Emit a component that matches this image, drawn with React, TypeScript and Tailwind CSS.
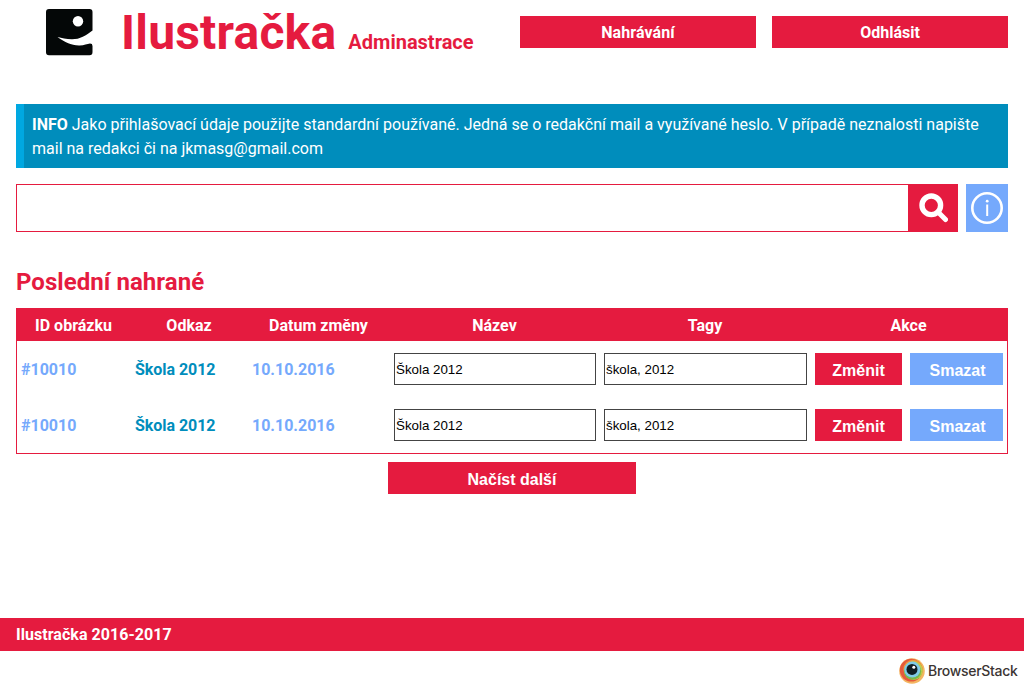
const rows = [
  { id: '#10010', link: 'Škola 2012', date: '10.10.2016', name: 'Škola 2012', tags: 'škola, 2012' },
  { id: '#10010', link: 'Škola 2012', date: '10.10.2016', name: 'Škola 2012', tags: 'škola, 2012' },
];

const columns = ['ID obrázku', 'Odkaz', 'Datum změny', 'Název', 'Tagy', 'Akce'];

function Logo() {
  return (
    <svg viewBox="0 0 47 47" className="h-[47px] w-[47px]" aria-hidden="true">
      <path
        d="M3 0H43.5Q46.5 0 46.5 3V21.500C40 26.500 34 30.300 26 30.300C20 30.300 16 28.800 11.500 28C18 32.800 25 36.300 33 36.600C38 36.800 41 34.800 44 34.600Q46.500 34.600 46.500 37V43Q46.500 46.300 43.500 46.300H3Q0 46.300 0 43.300V3Q0 0 3 0Z"
        fill="#040707"
      />
      <circle cx="32" cy="12.300" r="5.200" fill="#fff" />
    </svg>
  );
}

function SearchIcon() {
  return (
    <svg viewBox="0 0 30 30" className="h-[30px] w-[30px]" aria-hidden="true">
      <circle cx="13.300" cy="12.300" r="9.300" fill="none" stroke="#fff" strokeWidth="5.400" />
      <path d="M20 19L27.500 26.500" stroke="#fff" strokeWidth="5" strokeLinecap="round" />
    </svg>
  );
}

function InfoIcon() {
  return (
    <svg viewBox="0 0 32 32" className="h-8 w-8" aria-hidden="true">
      <circle cx="16" cy="16" r="14.700" fill="none" stroke="#fff" strokeWidth="2.600" />
      <path d="M16.200 12.500V24" stroke="#fff" strokeWidth="2" />
      <circle cx="16.200" cy="9.200" r="1.400" fill="#fff" />
    </svg>
  );
}

function BrowserStackMark() {
  return (
    <svg viewBox="0 0 26 26" className="h-[26px] w-[26px]" aria-hidden="true">
      <circle cx="13" cy="13" r="12.800" fill="#f4b661" />
      <circle cx="12.200" cy="12.100" r="11.400" fill="#e55a3c" />
      <circle cx="14" cy="11.300" r="9.600" fill="#ee9b3f" />
      <circle cx="14.500" cy="12.600" r="9.400" fill="#bdce4b" />
      <circle cx="13.600" cy="13.200" r="8.500" fill="#78b84c" />
      <circle cx="13.300" cy="11.600" r="8" fill="#7fcbe8" />
      <circle cx="13" cy="11.400" r="5.500" fill="#101e24" />
      <circle cx="14.800" cy="9.200" r="1.500" fill="#fff" />
    </svg>
  );
}

export default function App() {
  return (
    <div className="flex h-[690px] w-[1024px] flex-col overflow-hidden bg-white font-['Roboto',sans-serif] text-base leading-6 text-black">
      <header className="flex h-[104px] shrink-0 items-start px-4">
        <div className="ml-[30px] mt-[9px] shrink-0">
          <Logo />
        </div>
        <h1 className="ml-[28px] mt-px w-[399px] whitespace-nowrap text-5xl font-bold leading-[64px] tracking-[0.2px] text-[#e51b3f]">
          Ilustračka<small className="ml-[12px] text-xl font-bold tracking-normal">Adminastrace</small>
        </h1>
        <nav className="mt-4 flex gap-4 text-center font-bold leading-[34px] text-white">
          <a className="h-8 w-[236px] bg-[#e51b3f] tracking-[0.1px]">Nahrávání</a>
          <a className="h-8 w-[236px] bg-[#e51b3f]">Odhlásit</a>
        </nav>
      </header>

      <main className="flex flex-1 flex-col px-4">
        <p className="h-16 border-l-8 border-[#00a8e1] bg-[#008dbc] pb-[7px] pl-2 pr-4 pt-[9px] leading-6 text-white">
          <strong className="font-bold">INFO</strong> Jako přihlašovací údaje použijte standardní používané. Jedná se
          o redakční mail a využívané heslo. V případě neznalosti napište mail na redakci či na jkmasg@gmail.com
        </p>

        <form className="mt-4 flex h-12">
          <input type="text" aria-label="Hledat" className="min-w-0 flex-1 border border-r-0 border-[#e51b3f] px-2 outline-none" />
          <button type="button" aria-label="Hledat" className="flex w-[50px] items-center justify-center bg-[#e51b3f]">
            <SearchIcon />
          </button>
          <button type="button" aria-label="Info" className="ml-2 flex w-[42px] items-center justify-center bg-[#75a9fc]">
            <InfoIcon />
          </button>
        </form>

        <h2 className="mt-[34px] text-2xl font-bold leading-8 tracking-[0.05px] text-[#e51b3f]">Poslední nahrané</h2>

        <div className="mt-[10px] border border-[#e51b3f] font-bold">
          <div className="grid h-8 grid-cols-[114px_117px_142px_210px_211px_196px] bg-[#e51b3f] text-center leading-[34px] text-white">
            {columns.map((column) => (
              <div key={column} className="pr-px">{column}</div>
            ))}
          </div>
          {rows.map((row, index) => (
            <div
              key={index}
              className="grid h-14 grid-cols-[114px_117px_142px_210px_211px_196px] items-center text-[#75a9fc]"
            >
              <div className="px-1 pt-0.5">{row.id}</div>
              <div className="px-1 pt-0.5 tracking-[-0.05px] text-[#008dbc]">{row.link}</div>
              <div className="px-1 pt-0.5">{row.date}</div>
              <div className="flex px-1">
                <input
                  defaultValue={row.name}
                  className="h-8 w-full border border-[#444] px-px font-['Liberation_Sans',sans-serif] text-[13.333px] font-normal text-black outline-none"
                />
              </div>
              <div className="flex px-1">
                <input
                  defaultValue={row.tags}
                  className="h-8 w-full border border-[#444] px-px font-['Liberation_Sans',sans-serif] text-[13.333px] font-normal text-black outline-none"
                />
              </div>
              <div className="flex gap-2 px-1 font-['Liberation_Sans',sans-serif] text-white">
                <button type="button" className="h-8 w-[87px] bg-[#e51b3f] pt-[3px]">Změnit</button>
                <button type="button" className="h-8 w-[93px] bg-[#75a9fc] pl-0.5 pt-[3px]">Smazat</button>
              </div>
            </div>
          ))}
        </div>

        <button
          type="button"
          className="mt-2 h-8 w-[248px] self-center bg-[#e51b3f] pt-[3px] font-['Liberation_Sans',sans-serif] font-bold text-white"
        >
          Načíst další
        </button>
      </main>

      <footer className="shrink-0">
        <div className="h-[33px] bg-[#e51b3f] px-4 font-bold leading-[34px] tracking-[0.04px] text-white">
          Ilustračka 2016-2017
        </div>
        <div className="flex h-[39px] items-center justify-end gap-[3px] pr-[6px]">
          <BrowserStackMark />
          <span className="w-[90px] whitespace-nowrap font-['Inter',sans-serif] text-sm font-medium tracking-[-0.3px] text-[#3c3533]">
            BrowserStack
          </span>
        </div>
      </footer>
    </div>
  );
}
